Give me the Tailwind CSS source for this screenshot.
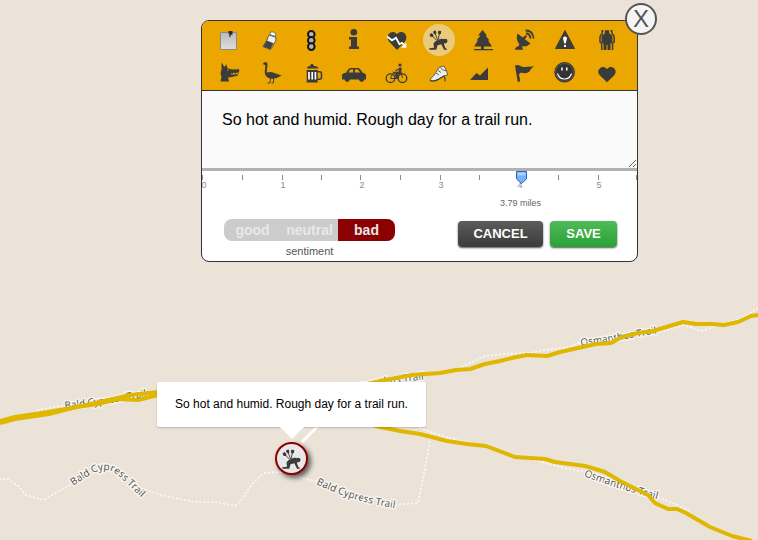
<!DOCTYPE html>
<html lang="en">
<head>
  <meta charset="UTF-8" />
  <meta name="viewport" content="width=device-width, initial-scale=1" />
  <title>Trail Map</title>
  <script src="https://cdn.jsdelivr.net/npm/@tailwindcss/browser@4"></script>
</head>
<body class="bg-[#ebe2d8] font-['Liberation_Sans',Arial,sans-serif]">

  <main class="relative min-h-screen overflow-hidden">

    <!-- Map -->
    <svg class="absolute top-0 left-0" width="758" height="540" viewBox="0 0 758 540" fill="none" aria-label="Map">
      <defs>
        <path id="label1" d="M65 409 L105 404 L160 394" />
        <path id="label2" d="M73 486 Q88 475 98 471 Q110 467 121 478 L144 500" />
        <path id="label3" d="M316 484 Q352 502 400 509" />
        <path id="label4" d="M348 391 Q385 383 430 379" />
        <path id="label5" d="M581 346 L615 341 L665 332" />
        <path id="label6" d="M584 476 Q620 490 664 501" />
      </defs>

      <!-- footpaths -->
      <g stroke="#faf7f1" stroke-width="2" stroke-linecap="round" stroke-dasharray="0.5 3.5">
        <path d="M0 479 L8 479 L18 486 L26 495 L43 500 L72 484" />
        <path d="M138 488 L165 496 L195 502 L215 502 L235 506 L242 499 L252 484 L264 473 L280 472 L318 482" />
        <path d="M392 505 L418 503 L424 474 L430 440" />
        <path d="M38 410 L66 405" />
        <path d="M420 428 L445 437 L471 443" />
        <path d="M455 370 L485 356 L505 354 L530 353 L545 350 L565 348 L582 342" />
        <path d="M660 332 L683 325 L702 331 L718 325 L740 319 L758 308" />
        <path d="M535 460 L560 467 L584 472" />
        <path d="M655 496 L675 504 L690 511" />
      </g>

      <g font-family="'Open Sans','Noto Sans',sans-serif" font-size="10" fill="#4d4d4d" stroke="#f8f5f0" stroke-width="3" stroke-linejoin="round" paint-order="stroke">
        <text><textPath href="#label1">Bald Cypress Trail</textPath></text>
        <text><textPath href="#label2">Bald Cypress Trail</textPath></text>
        <text><textPath href="#label3">Bald Cypress Trail</textPath></text>
        <text><textPath href="#label4">Osmanthus Trail</textPath></text>
        <text><textPath href="#label5">Osmanthus Trail</textPath></text>
        <text><textPath href="#label6">Osmanthus Trail</textPath></text>
      </g>

      <!-- run -->
      <g stroke="#dfb700" stroke-width="4" stroke-linejoin="round">
        <path d="M0 421 L15 417 L42 413 L72 408 L100 402 L130 395 L158 392 L230 391 L345 389 L385 380 L412 375 L440 373 L456 370 L470 369 L485 364 L500 361 L516 357 L527 355 L547 356 L560 352 L578 348 L596 344 L611 343 L622 337 L638 333 L653 331 L683 322 L696 324 L711 324 L724 325 L738 322 L751 316 L758 315" />
        <path d="M0 423 L15 419 L49 414 L76 407 L98 404 L118 399 L138 400 L158 395" />
        <path d="M340 416 L380 427 L400 431 L420 434 L447 441 L467 444 L486 446 L515 457 L545 459 L555 462 L585 466 L605 472 L620 481 L648 495 L655 503 L668 509 L677 509 L686 513 L710 527 L732 536 L752 541" />
      </g>
      <path d="M302 442 L318 426" stroke="#ffffff" stroke-width="3" />
    </svg>

    <!-- Note editor -->
    <form class="absolute top-5 left-[201px] w-[437px] rounded-lg border border-[#333] bg-white">

      <div class="grid grid-cols-10 gap-y-px rounded-t-[7px] border-b border-[#333] bg-[#eba700] pt-[3px] pr-[9px] pb-px pl-[5px] text-[#3b3b3b]">
        <button type="button" class="grid place-items-center" aria-label="Note">
          <svg class="size-8" viewBox="0 0 32 32">
            <defs>
              <linearGradient id="paper" x2="0" y2="1"><stop stop-color="#b9b9b9" /><stop offset="1" stop-color="#dedede" /></linearGradient>
            </defs>
            <path d="M8.500 8.500h16v17h-16z" fill="url(#paper)" stroke="#8d8a80" />
            <path d="M16.500 7h4v3.500l-2 .5v2l-1.500-.5.500-2.500-1-.5z" fill="#2b2b2b" />
          </svg>
        </button>
        <button type="button" class="grid place-items-center" aria-label="Drink">
          <svg class="size-8" viewBox="0 0 32 32">
            <path d="M15.500 11l6 2.200q1.500 3-1 5.800L16.500 25.500l-7.500-3 4-6.500q.5-3 2.500-5z" fill="#ededed" stroke="#4a4a4a" stroke-width=".9" />
            <path d="M12.800 16.500l6.700 2.700-3.200 6-7-2.700z" fill="#444" />
            <path d="M16.500 8q3-.8 5.500 1.700l-.8 2.800-5.500-2z" fill="#fff" stroke="#555" stroke-width=".8" />
          </svg>
        </button>
        <button type="button" class="grid place-items-center" aria-label="Traffic">
          <svg class="size-8" viewBox="0 0 32 32">
            <g fill="#b5b5b5" stroke="#161616" stroke-width="2">
              <circle cx="15.300" cy="10.200" r="3.300" /><circle cx="15.300" cy="16.400" r="3.300" /><circle cx="15.300" cy="22.600" r="3.300" />
            </g>
          </svg>
        </button>
        <button type="button" class="grid place-items-center" aria-label="Information">
          <svg class="size-8" viewBox="0 0 32 32" fill="currentColor">
            <circle cx="15.800" cy="8.300" r="3.300" />
            <path d="M11 13h8v9.500h2V25H11v-2.500h2v-7h-2z" />
          </svg>
        </button>
        <button type="button" class="grid place-items-center" aria-label="Heart rate">
          <svg class="size-8" viewBox="0 0 32 32" fill="currentColor">
            <path d="M17 26L9 17.500C4.500 11 12 4.500 17 10c5-5.500 12.500 1 8 7.500z" />
            <path d="M7 12.500l5 3.800 4-2.500 3.500 6.500 2.500-1.500 3.500 3.500" fill="none" stroke="#fff" stroke-width="1.800" />
            <path d="M26.300 18.500v5.200h-5.200z" fill="#fff" />
          </svg>
        </button>
        <button type="button" class="grid place-items-center" aria-label="Pain" aria-pressed="true">
          <svg class="size-8 rounded-full bg-[#ebcb7b]" viewBox="0 0 32 32">
            <defs>
              <g id="pain" fill="currentColor">
                <path d="M8 11l6 5.500M11.500 8l3.200 8M16.500 8l-1.200 7.500" stroke="currentColor" stroke-width=".9" fill="none" />
                <path d="M6.500 10.500l2-1.500 2 2-.3 2-2.500 0zM10 7.500l2.500-1.200 1 2.700-1.300 1.500-1.700-1zM15.300 6.700l2.900.3-.2 2.700-1.800 1-1.400-1.600z" />
                <circle cx="22.300" cy="17" r="2.200" />
                <path d="M10.500 19.500Q12 16.500 15 16q3-1.800 5.500-1l1.500 2-1 3.500 1.500 3.700 1.500.8v.8h-3l-2.700-5.600-3.800 1-1.200 4.600H6.300v-1.600l4.700-.4z" />
              </g>
            </defs>
            <use href="#pain" />
          </svg>
        </button>
        <button type="button" class="grid place-items-center" aria-label="Forest">
          <svg class="size-8" viewBox="0 0 32 32" fill="currentColor">
            <path d="M17.500 6l4.500 5.500h-1.500l4 5h-1.500l4 6h-8.200V25H28v1.300H9V25h7v-2.500H9l4-6h-1.500l4-5H13z" />
          </svg>
        </button>
        <button type="button" class="grid place-items-center" aria-label="Signal">
          <svg class="size-8" viewBox="0 0 32 32" fill="currentColor">
            <path d="M10.500 9.500L23.500 19.500Q19 24 14 21.500 8 17 10.500 9.500zM8 25.800q0-3 3.500-3.500l1-2.500 2.500 2 1 4zM15.500 13.500l3.500-2.500 1 1.200-2.500 3.500z" />
            <path d="M19 9.500q4 0 4.500 5M18.500 6.500q7.500 0 8 8" fill="none" stroke="currentColor" stroke-width="1.800" />
          </svg>
        </button>
        <button type="button" class="grid place-items-center" aria-label="Warning">
          <svg class="size-8" viewBox="0 0 32 32" fill="currentColor">
            <path d="M16 6.500l9.500 18h-19z" stroke="currentColor" stroke-linejoin="round" />
            <path d="M14 14.500q0-2 2-2t2 2l-1.300 5h-1.400zM15 21h2v2h-2z" fill="#fff" />
          </svg>
        </button>
        <button type="button" class="grid place-items-center" aria-label="Crowd">
          <svg class="size-8" viewBox="0 0 32 32" fill="currentColor">
            <path d="M14 6.300h4l.5 3.500q3 1 3 3V19l-2 .5V26h-3v-5h-1v5h-3v-6.500l-2-.5v-6.200q0-2 3-3z" />
            <path d="M12.500 6.800h-1.200L11 10q-2 1-2 3.500V18l1.700 1.500V26M19.500 6.800h1.300l.4 3.200q2 1 2 3.500V18L21.500 19.500V26" fill="none" stroke="currentColor" stroke-width="1.500" />
          </svg>
        </button>

        <button type="button" class="grid place-items-center" aria-label="Dog">
          <svg class="size-8" viewBox="0 0 32 32" fill="currentColor">
            <path d="M9.500 5.500l3 4.500 1.700-2.700 1.300 4 4.500 1.200 7-.2.300 2.200-1.800 1.200-6 .3-.3 1.400 7-.2-.7 1.500-5.500 1.300-4 .5 1 4H8.500l1-5q-1.700-3 0-7z" />
            <path d="M20.500 15.800v1.200M23.500 15.500v1.400M26 15.200v1.600" stroke="currentColor" stroke-width=".8" />
            <path d="M15 12.800l1.800.6" stroke="#eba700" stroke-width=".8" />
          </svg>
        </button>
        <button type="button" class="grid place-items-center" aria-label="Goose">
          <svg class="size-8" viewBox="0 0 32 32" fill="currentColor">
            <path d="M8.500 7l2.500-2q2.500-.5 2.500 2.500l-.8 8q5.500-1.500 8.800 1l6.200 2-4 2q-6 2.500-10 0-4-2.500-2.700-7.500l.3-5z" />
            <path d="M16.500 21l-.5 5h-2.500M19.500 21v5h-2" fill="none" stroke="currentColor" stroke-width=".9" />
          </svg>
        </button>
        <button type="button" class="grid place-items-center" aria-label="Beer">
          <svg class="size-8" viewBox="0 0 32 32" fill="currentColor">
            <path d="M11 11.500q0-2.500 3-2.500 2-4.500 4 0 4 0 4.500 2.500zM10.700 13h11v12.500h-11z" />
            <path d="M21 14.800h2.500q2 0 2 2v3.500q0 2-2 2H21" fill="none" stroke="currentColor" stroke-width="1.500" />
            <path d="M13 15v7.500M16.200 15v7.500M19.400 15v7.500" stroke="#fff" stroke-width="1.700" />
          </svg>
        </button>
        <button type="button" class="grid place-items-center" aria-label="Car">
          <svg class="size-8" viewBox="0 0 32 32" fill="currentColor">
            <path d="M4 17.500q1.500-1.700 4-1.800L10.500 12q1-1 2.500-1h6.500q1.700 0 2.500 1l3 4q3 .5 3 2.500v4h-1.500a2.900 2.900 0 0 1-5.500 0H12a2.900 2.900 0 0 1-5.500 0H4z" />
            <circle cx="9.300" cy="22.500" r="2.200" /><circle cx="23.500" cy="22.500" r="2.200" />
            <path d="M10.500 15.500l1.700-3h3v3zM17 12.500h3l2 3h-5z" fill="#eba700" />
          </svg>
        </button>
        <button type="button" class="grid place-items-center" aria-label="Bike">
          <svg class="size-8" viewBox="0 0 32 32" fill="none" stroke="currentColor">
            <g stroke-width="1.300"><circle cx="10.500" cy="21.200" r="4.300" /><circle cx="22.500" cy="21.200" r="4.300" /></g>
            <path d="M10.500 21l3-5.500 7.500-.5-4.500 6.500h-6M13 14.500l4 6.500M20.500 14l2 7" stroke-width="1" />
            <path d="M20.500 10.500l-.5 5-3.500 1.500.5 5" stroke-width="2.500" />
            <path d="M19.500 11.500l-4 2.500" stroke-width="1.200" />
            <circle cx="20" cy="8" r="1.600" fill="currentColor" stroke="none" />
          </svg>
        </button>
        <button type="button" class="grid place-items-center" aria-label="Shoe">
          <svg class="size-8" viewBox="0 0 32 32">
            <path d="M16 10.500l5-1.500 3 6 .5 3-3.500 1-6 3.500q-4 2.500-8 1 0-2 3.500-4.500z" fill="#ececec" stroke="#555" stroke-width=".9" />
            <path d="M13 16l3 2M15 13.500l3 2M17.500 10.800q2 3 5.500 3" stroke="#555" stroke-width=".9" fill="none" />
            <path d="M7 23.500q4 1.500 8-1l6-3.500 1 2.500v3" fill="none" stroke="#3b3b3b" stroke-width="1.100" />
          </svg>
        </button>
        <button type="button" class="grid place-items-center" aria-label="Elevation">
          <svg class="size-8" viewBox="0 0 32 32" fill="currentColor">
            <path d="M5 23l6.500-7 3.500 2.500 8-8V23z" />
          </svg>
        </button>
        <button type="button" class="grid place-items-center" aria-label="Flag">
          <svg class="size-8" viewBox="0 0 32 32" fill="currentColor">
            <path d="M8 8.700q2-1.500 4.500-.2 3 2 6 1.500l8.500-.8q-3 2-4.500 5.300-3.500 2.500-6 1.500-3-.8-4.500 1.200l1.200 7.300-2.400.5z" />
          </svg>
        </button>
        <button type="button" class="grid place-items-center" aria-label="Smile">
          <svg class="size-8" viewBox="0 0 32 32" fill="none">
            <circle cx="15.600" cy="15.300" r="9.800" fill="#333" stroke="#333" />
            <circle cx="15.600" cy="15.300" r="8.900" stroke="#777" stroke-width=".5" />
            <path d="M13 10.500v3M17.800 10.500v3" stroke="#fff" stroke-width="1.500" />
            <path d="M8.500 16.500q1.500 5.500 7 5.500t7-5.500" stroke="#fff" stroke-width="1.100" />
          </svg>
        </button>
        <button type="button" class="grid place-items-center" aria-label="Love">
          <svg class="size-8" viewBox="0 0 32 32" fill="currentColor">
            <path d="M16 25.300L9 18.500C4 13 11.500 6.500 16 12c4.500-5.500 12 1 7 6.500z" />
          </svg>
        </button>
      </div>

      <textarea aria-label="Note text" class="block h-20 w-full resize-y border-b-3 border-[#b2b2b2] bg-[#fafafa] px-5 pt-[19px] text-base leading-5 text-black outline-none">So hot and humid. Rough day for a trail run.</textarea>

      <!-- Distance -->
      <div class="relative h-10">
        <svg class="block h-5 w-full" viewBox="0 0 435 20" aria-hidden="true">
          <path d="M.5 4v5M40.500 4v5M80.500 4v5M119.500 4v5M158.500 4v5M198.500 4v5M238.500 4v5M277.500 4v5M317.500 4v5M356.500 4v5M396.500 4v5M434.500 4v5" stroke="#8c8c8c" />
          <g font-size="9" fill="#8c8c8c" text-anchor="middle">
            <text x="2" y="17">0</text><text x="81" y="17">1</text><text x="160" y="17">2</text><text x="239" y="17">3</text><text x="318" y="17">4</text><text x="397" y="17">5</text>
          </g>
          <path d="M314.500 .5h10v7.500l-5 4.500-5-4.500z" fill="#73b4f2" stroke="#2f5fc4" stroke-linejoin="round" />
          <path d="M315.500 1.500h8v3h-8z" fill="#a9d2fa" />
        </svg>
        <input type="range" id="distance" min="0" max="5.5" step="0.01" value="3.79" class="absolute inset-x-0 top-0 h-4 opacity-0" />
        <label for="distance" class="block pt-1.5 pl-[298px] text-[9px] leading-3 text-[#666]">3.79 miles</label>
      </div>

      <div class="flex items-start justify-between pt-2 pr-5 pb-[3px] pl-[22px]">
        <fieldset class="flex w-[171px] flex-col">
          <div class="grid h-[22px] grid-cols-3 overflow-hidden rounded-lg bg-[#cccccc] text-center text-sm leading-[22px] font-bold text-[#e8e8e8]">
            <label class="has-checked:bg-[#8b0000]"><input type="radio" name="sentiment" class="sr-only" />good</label>
            <label class="has-checked:bg-[#8b0000]"><input type="radio" name="sentiment" class="sr-only" />neutral</label>
            <label class="has-checked:bg-[#8b0000]"><input type="radio" name="sentiment" class="sr-only" checked />bad</label>
          </div>
          <p class="pt-[3px] text-center text-[11px] leading-[14px] text-[#555]">sentiment</p>
        </fieldset>
        <div class="flex gap-[7px] pt-0.5 text-[13px] leading-[25px] font-bold text-white">
          <button type="button" class="h-[26px] w-[85px] rounded bg-linear-to-b from-[#5c5c5c] to-[#3b3b3b] pb-px shadow-[0_1px_2px_#000000aa]">CANCEL</button>
          <button type="submit" class="h-[26px] w-[67px] rounded bg-linear-to-b from-[#4fba59] to-[#27a234] pb-px shadow-[0_1px_2px_#000000aa]">SAVE</button>
        </div>
      </div>

      <button type="button" aria-label="Close" class="absolute -top-[18px] -right-5 size-8 rounded-full border-2 border-[#555] bg-[#f5f5f5] text-center text-2xl leading-7 text-[#555]">X</button>
    </form>

    <!-- Map pin -->
    <div class="absolute top-[382px] left-[157px] flex w-[269px] flex-col items-center">
      <p class="w-full rounded-xs bg-white py-[13px] text-center text-xs leading-[19px] text-black shadow-[0_1px_2px_#00000033]">So hot and humid. Rough day for a trail run.</p>
      <svg class="relative h-3 w-6" viewBox="0 0 24 12" fill="#fff"><path d="M0 0h24L12 12z" /></svg>
      <button type="button" aria-label="Bad: pain" class="mt-[3px] grid size-[33px] place-items-center rounded-full border-2 border-[#8b0000] bg-[#e8e8e8] text-[#3b3b3b] shadow-[3px_3px_5px_#00000099]">
        <svg class="size-7" viewBox="2 2 28 28"><use href="#pain" /></svg>
      </button>
    </div>

  </main>

</body>
</html>
